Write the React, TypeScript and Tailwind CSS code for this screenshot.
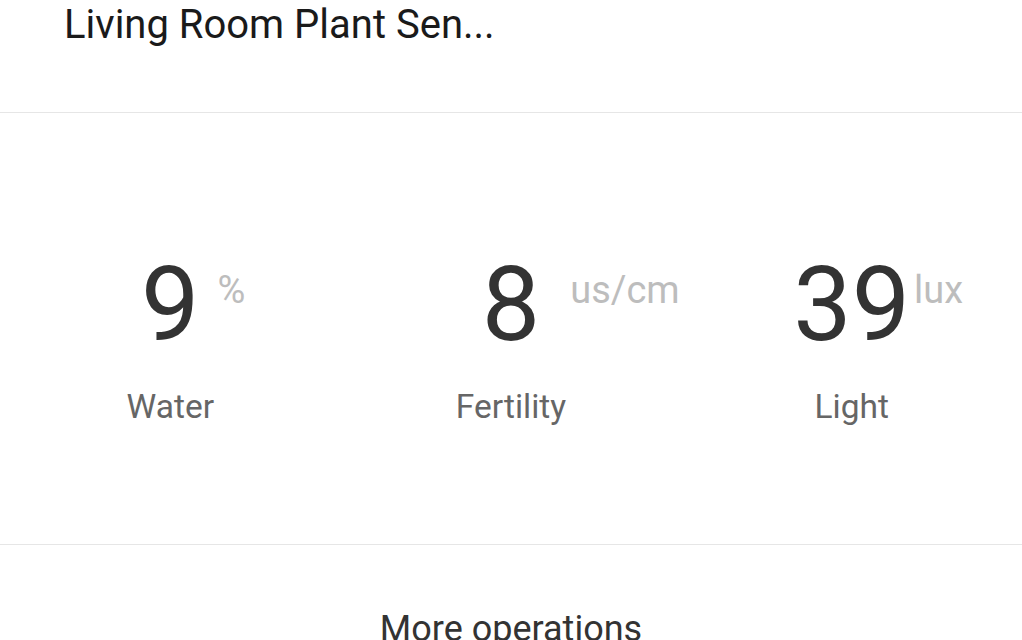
const metrics = [
  { value: '9', unit: '%', label: 'Water', unitGap: 'ml-[18px]' },
  { value: '8', unit: 'us/cm', label: 'Fertility', unitGap: 'ml-[30px]' },
  { value: '39', unit: 'lux', label: 'Light', unitGap: 'ml-[4px]' },
];

export default function App() {
  return (
    <div className="w-[1022px] h-[640px] overflow-hidden bg-white font-['Roboto',sans-serif]">
      {/* Header */}
      <div className="h-[113px] border-b border-[#e6e6e6] pl-[64px] pt-[5px]">
        <h1 className="text-[40px] leading-none font-normal text-[#1a1a1a]">Living Room Plant Sen...</h1>
      </div>

      {/* Readings */}
      <div className="h-[432px] border-b border-[#e6e6e6] grid grid-cols-3 pt-[140px]">
        {metrics.map((m) => (
          <div key={m.label} className="flex flex-col items-center">
            <div className="relative">
              <span className="block text-[104px] leading-none text-[#333333]">{m.value}</span>
              <span
                className={`absolute left-full top-[18px] ${m.unitGap} text-[38px] leading-none text-[#bdbdbd] whitespace-nowrap`}
              >
                {m.unit}
              </span>
            </div>
            <span className="mt-[33px] text-[33.5px] leading-none text-[#666666]">{m.label}</span>
          </div>
        ))}
      </div>

      {/* More operations */}
      <div className="flex justify-center pt-[66px]">
        <span className="text-[36px] leading-none text-[#333333]">More operations</span>
      </div>
    </div>
  );
}
